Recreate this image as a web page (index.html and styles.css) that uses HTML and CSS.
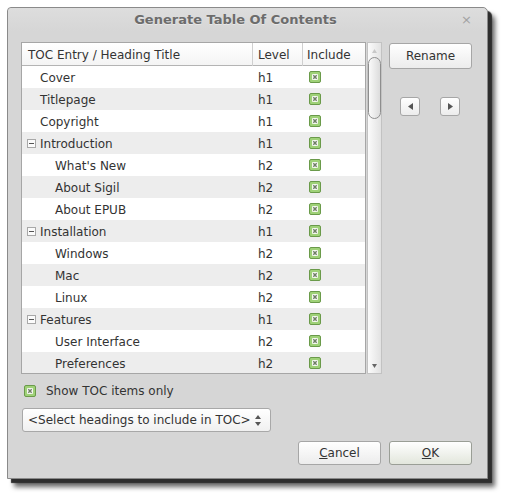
FILE: index.html
```html
<!DOCTYPE html>
<html>
<head>
<meta charset="utf-8">
<link rel="stylesheet" href="styles.css">
</head>
<body>
<div class="dialog">
  <div class="titlebar">
    <span></span>
    <span class="title">Generate Table Of Contents</span>
    <span class="close">×</span>
  </div>
  <div class="main">
    <div class="leftcol">
      <div class="tablewrap">
        <div class="table">
          <div class="hdr">
            <div class="hc c1">TOC Entry / Heading Title</div>
            <div class="hc c2">Level</div>
            <div class="hc c3">Include</div>
          </div>
          <div class="rows">
            <div class="row"><div class="c1 ind1">Cover</div><div class="c2">h1</div><div class="c3"><svg class="chk" width="12" height="12" viewBox="0 0 12 12"><rect x="0.5" y="0.5" width="11" height="11" rx="1.5" fill="#9fd178" stroke="#6a9a4a"/><rect x="3" y="3" width="6" height="6" rx="1" fill="#f6f8f2"/><path d="M4.3 4.3L7.7 7.7M7.7 4.3L4.3 7.7" stroke="#6f7d66" stroke-width="1.4"/></svg></div></div>
            <div class="row alt"><div class="c1 ind1">Titlepage</div><div class="c2">h1</div><div class="c3"><svg class="chk" width="12" height="12" viewBox="0 0 12 12"><rect x="0.5" y="0.5" width="11" height="11" rx="1.5" fill="#9fd178" stroke="#6a9a4a"/><rect x="3" y="3" width="6" height="6" rx="1" fill="#f6f8f2"/><path d="M4.3 4.3L7.7 7.7M7.7 4.3L4.3 7.7" stroke="#6f7d66" stroke-width="1.4"/></svg></div></div>
            <div class="row"><div class="c1 ind1">Copyright</div><div class="c2">h1</div><div class="c3"><svg class="chk" width="12" height="12" viewBox="0 0 12 12"><rect x="0.5" y="0.5" width="11" height="11" rx="1.5" fill="#9fd178" stroke="#6a9a4a"/><rect x="3" y="3" width="6" height="6" rx="1" fill="#f6f8f2"/><path d="M4.3 4.3L7.7 7.7M7.7 4.3L4.3 7.7" stroke="#6f7d66" stroke-width="1.4"/></svg></div></div>
            <div class="row alt"><div class="c1 indx"><span class="exp"></span>Introduction</div><div class="c2">h1</div><div class="c3"><svg class="chk" width="12" height="12" viewBox="0 0 12 12"><rect x="0.5" y="0.5" width="11" height="11" rx="1.5" fill="#9fd178" stroke="#6a9a4a"/><rect x="3" y="3" width="6" height="6" rx="1" fill="#f6f8f2"/><path d="M4.3 4.3L7.7 7.7M7.7 4.3L4.3 7.7" stroke="#6f7d66" stroke-width="1.4"/></svg></div></div>
            <div class="row"><div class="c1 ind2">What's New</div><div class="c2">h2</div><div class="c3"><svg class="chk" width="12" height="12" viewBox="0 0 12 12"><rect x="0.5" y="0.5" width="11" height="11" rx="1.5" fill="#9fd178" stroke="#6a9a4a"/><rect x="3" y="3" width="6" height="6" rx="1" fill="#f6f8f2"/><path d="M4.3 4.3L7.7 7.7M7.7 4.3L4.3 7.7" stroke="#6f7d66" stroke-width="1.4"/></svg></div></div>
            <div class="row alt"><div class="c1 ind2">About Sigil</div><div class="c2">h2</div><div class="c3"><svg class="chk" width="12" height="12" viewBox="0 0 12 12"><rect x="0.5" y="0.5" width="11" height="11" rx="1.5" fill="#9fd178" stroke="#6a9a4a"/><rect x="3" y="3" width="6" height="6" rx="1" fill="#f6f8f2"/><path d="M4.3 4.3L7.7 7.7M7.7 4.3L4.3 7.7" stroke="#6f7d66" stroke-width="1.4"/></svg></div></div>
            <div class="row"><div class="c1 ind2">About EPUB</div><div class="c2">h2</div><div class="c3"><svg class="chk" width="12" height="12" viewBox="0 0 12 12"><rect x="0.5" y="0.5" width="11" height="11" rx="1.5" fill="#9fd178" stroke="#6a9a4a"/><rect x="3" y="3" width="6" height="6" rx="1" fill="#f6f8f2"/><path d="M4.3 4.3L7.7 7.7M7.7 4.3L4.3 7.7" stroke="#6f7d66" stroke-width="1.4"/></svg></div></div>
            <div class="row alt"><div class="c1 indx"><span class="exp"></span>Installation</div><div class="c2">h1</div><div class="c3"><svg class="chk" width="12" height="12" viewBox="0 0 12 12"><rect x="0.5" y="0.5" width="11" height="11" rx="1.5" fill="#9fd178" stroke="#6a9a4a"/><rect x="3" y="3" width="6" height="6" rx="1" fill="#f6f8f2"/><path d="M4.3 4.3L7.7 7.7M7.7 4.3L4.3 7.7" stroke="#6f7d66" stroke-width="1.4"/></svg></div></div>
            <div class="row"><div class="c1 ind2">Windows</div><div class="c2">h2</div><div class="c3"><svg class="chk" width="12" height="12" viewBox="0 0 12 12"><rect x="0.5" y="0.5" width="11" height="11" rx="1.5" fill="#9fd178" stroke="#6a9a4a"/><rect x="3" y="3" width="6" height="6" rx="1" fill="#f6f8f2"/><path d="M4.3 4.3L7.7 7.7M7.7 4.3L4.3 7.7" stroke="#6f7d66" stroke-width="1.4"/></svg></div></div>
            <div class="row alt"><div class="c1 ind2">Mac</div><div class="c2">h2</div><div class="c3"><svg class="chk" width="12" height="12" viewBox="0 0 12 12"><rect x="0.5" y="0.5" width="11" height="11" rx="1.5" fill="#9fd178" stroke="#6a9a4a"/><rect x="3" y="3" width="6" height="6" rx="1" fill="#f6f8f2"/><path d="M4.3 4.3L7.7 7.7M7.7 4.3L4.3 7.7" stroke="#6f7d66" stroke-width="1.4"/></svg></div></div>
            <div class="row"><div class="c1 ind2">Linux</div><div class="c2">h2</div><div class="c3"><svg class="chk" width="12" height="12" viewBox="0 0 12 12"><rect x="0.5" y="0.5" width="11" height="11" rx="1.5" fill="#9fd178" stroke="#6a9a4a"/><rect x="3" y="3" width="6" height="6" rx="1" fill="#f6f8f2"/><path d="M4.3 4.3L7.7 7.7M7.7 4.3L4.3 7.7" stroke="#6f7d66" stroke-width="1.4"/></svg></div></div>
            <div class="row alt"><div class="c1 indx"><span class="exp"></span>Features</div><div class="c2">h1</div><div class="c3"><svg class="chk" width="12" height="12" viewBox="0 0 12 12"><rect x="0.5" y="0.5" width="11" height="11" rx="1.5" fill="#9fd178" stroke="#6a9a4a"/><rect x="3" y="3" width="6" height="6" rx="1" fill="#f6f8f2"/><path d="M4.3 4.3L7.7 7.7M7.7 4.3L4.3 7.7" stroke="#6f7d66" stroke-width="1.4"/></svg></div></div>
            <div class="row"><div class="c1 ind2">User Interface</div><div class="c2">h2</div><div class="c3"><svg class="chk" width="12" height="12" viewBox="0 0 12 12"><rect x="0.5" y="0.5" width="11" height="11" rx="1.5" fill="#9fd178" stroke="#6a9a4a"/><rect x="3" y="3" width="6" height="6" rx="1" fill="#f6f8f2"/><path d="M4.3 4.3L7.7 7.7M7.7 4.3L4.3 7.7" stroke="#6f7d66" stroke-width="1.4"/></svg></div></div>
            <div class="row alt"><div class="c1 ind2">Preferences</div><div class="c2">h2</div><div class="c3"><svg class="chk" width="12" height="12" viewBox="0 0 12 12"><rect x="0.5" y="0.5" width="11" height="11" rx="1.5" fill="#9fd178" stroke="#6a9a4a"/><rect x="3" y="3" width="6" height="6" rx="1" fill="#f6f8f2"/><path d="M4.3 4.3L7.7 7.7M7.7 4.3L4.3 7.7" stroke="#6f7d66" stroke-width="1.4"/></svg></div></div>
          </div>
        </div>
        <div class="scrollbar">
          <div class="sb-up">
            <svg width="5" height="4" viewBox="0 0 5 4"><path d="M0 4L2.5 0L5 4Z" fill="#c8c8c8"/></svg>
          </div>
          <div class="sb-thumb"></div>
          <div class="sb-space"></div>
          <div class="sb-down">
            <svg width="5" height="4" viewBox="0 0 5 4"><path d="M0 0L5 0L2.5 4Z" fill="#666"/></svg>
          </div>
        </div>
      </div>
      <div class="showrow">
        <svg class="chk" width="12" height="12" viewBox="0 0 12 12"><rect x="0.5" y="0.5" width="11" height="11" rx="1.5" fill="#9fd178" stroke="#6a9a4a"/><rect x="3" y="3" width="6" height="6" rx="1" fill="#f6f8f2"/><path d="M4.3 4.3L7.7 7.7M7.7 4.3L4.3 7.7" stroke="#6f7d66" stroke-width="1.4"/></svg>
        <span>Show TOC items only</span>
      </div>
      <div class="combo">
        <span>&lt;Select headings to include in TOC&gt;</span>
        <svg class="spin" width="6" height="11" viewBox="0 0 6 11"><path d="M0 4L3 0L6 4Z" fill="#555"/><path d="M0 7L6 7L3 11Z" fill="#555"/></svg>
      </div>
    </div>
    <div class="rightcol">
      <button class="btn rename">Rename</button>
      <div class="arrows">
        <button class="btn arr"><svg width="5" height="7" viewBox="0 0 5 7"><path d="M5 0L5 7L0 3.5Z" fill="#555"/></svg></button>
        <button class="btn arr"><svg width="5" height="7" viewBox="0 0 5 7"><path d="M0 0L0 7L5 3.5Z" fill="#555"/></svg></button>
      </div>
    </div>
  </div>
  <div class="footer">
    <button class="btn fbtn"><u>C</u>ancel</button>
    <button class="btn fbtn ok"><u>O</u>K</button>
  </div>
</div>
</body>
</html>
```

FILE: styles.css
```css
* { box-sizing: border-box; }
html, body { margin: 0; padding: 0; background: #ffffff; }
body {
  font-family: "DejaVu Sans", "Liberation Sans", sans-serif;
  font-size: 12px;
  color: #333;
  padding: 7px 0 0 7px;
  min-height: 502px;
}
.dialog {
  width: 481px;
  height: 472px;
  background: #d6d6d6;
  border: 1px solid #8a8a8a;
  border-radius: 4px 5px 0 0;
  box-shadow: 4px 4px 1px #2e2e2e, 7px 8px 5px rgba(0,0,0,0.6);
  display: flex;
  flex-direction: column;
}
.titlebar {
  height: 23px;
  display: grid;
  grid-template-columns: 1fr auto 1fr;
  align-items: center;
  background: linear-gradient(#dddddd, #d6d6d6);
  border-radius: 4px 5px 0 0;
}
.title {
  font-weight: bold;
  font-size: 13px;
  color: #6c6c6c;
  text-shadow: 0 1px 0 #e8e8e8;
  padding-right: 24px;
}
.close {
  justify-self: end;
  padding-right: 15px;
  color: #a2a2a2;
  font-size: 13px;
}
.main {
  display: flex;
  padding: 11px 15px 0 13px;
  gap: 7px;
}
.leftcol { width: 361px; display: flex; flex-direction: column; }
.tablewrap { display: flex; gap: 1px; height: 332px; }
.table {
  width: 345px;
  height: 332px;
  border: 1px solid #a6a6a6;
  background: #fff;
  overflow: hidden;
}
.hdr {
  display: grid;
  grid-template-columns: 231px 50px 62px;
  height: 23px;
  border-bottom: 1px solid #b4b4b4;
  background: linear-gradient(#ffffff, #f4f4f4);
}
.hc { line-height: 22px; padding-top: 1px; border-right: 1px solid #cfcfcf; }
.hc.c1 { padding-left: 6px; }
.hc.c2 { padding-left: 5px; }
.hc.c3 { padding-left: 4px; border-right: none; }
.row {
  display: grid;
  grid-template-columns: 231px 50px 62px;
  height: 22px;
  align-items: center;
  background: #fff;
}
.row.alt { background: #ededed; }
.row .c1, .row .c2 { padding-top: 2px; }
.row .c2 { padding-left: 5px; }
.row .c3 { padding-left: 6px; display: flex; align-items: center; }
.ind1 { padding-left: 18px; }
.ind2 { padding-left: 33px; }
.indx { padding-left: 5px; display: flex; align-items: center; }
.exp {
  width: 9px; height: 9px;
  border: 1px solid #a8a8a8;
  background: #fbfbfb;
  margin-right: 4px;
  margin-top: -2px;
  display: flex; align-items: center; justify-content: center;
}
.exp::before { content: ""; width: 5px; height: 1px; background: #555; }
.chk { display: block; }
.scrollbar {
  width: 15px;
  height: 332px;
  border: 1px solid #c2c2c2;
  background: linear-gradient(to right, #fbfbfb, #e2e2e2);
  display: flex;
  flex-direction: column;
  align-items: center;
}
.sb-up { height: 14px; display: flex; align-items: center; justify-content: center; padding-top: 2px; }
.sb-thumb {
  width: 13px; height: 62px;
  border: 1px solid #8e8e8e;
  border-radius: 7px;
  background: linear-gradient(to right, #fafafa, #dcdcdc);
}
.sb-space { flex: 1; }
.sb-down { height: 14px; display: flex; align-items: center; justify-content: center; }
.showrow {
  margin-top: 10px;
  height: 14px;
  display: flex;
  align-items: center;
  gap: 10px;
  padding-left: 3px;
}
.combo {
  margin-top: 10px;
  margin-left: 1px;
  width: 249px;
  height: 24px;
  border: 1px solid #a8a8a8;
  border-radius: 3px;
  background: linear-gradient(#ffffff, #f0f0f0);
  display: flex;
  align-items: center;
  justify-content: space-between;
  padding: 0 9px 0 5px;
}
.rightcol { width: 83px; display: flex; flex-direction: column; }
.btn {
  font-family: "DejaVu Sans", "Liberation Sans", sans-serif;
  font-size: 12px;
  color: #333;
  border: 1px solid #a6a6a6;
  border-radius: 3px;
  background: linear-gradient(#ffffff, #ececec);
  padding: 0;
  display: flex;
  align-items: center;
  justify-content: center;
}
.rename { margin-top: 1px; height: 26px; width: 83px; }
.arrows { display: flex; gap: 20px; margin-top: 28px; padding-left: 11px; }
.arr { width: 20px; height: 19px; }
.footer {
  display: flex;
  justify-content: flex-end;
  gap: 8px;
  padding: 9px 15px 0 0;
}
.fbtn { width: 83px; height: 24px; }
.ok { background: linear-gradient(#ffffff, #e2e6dc); border-color: #9a9e96; }
u { text-decoration: underline; }
```
